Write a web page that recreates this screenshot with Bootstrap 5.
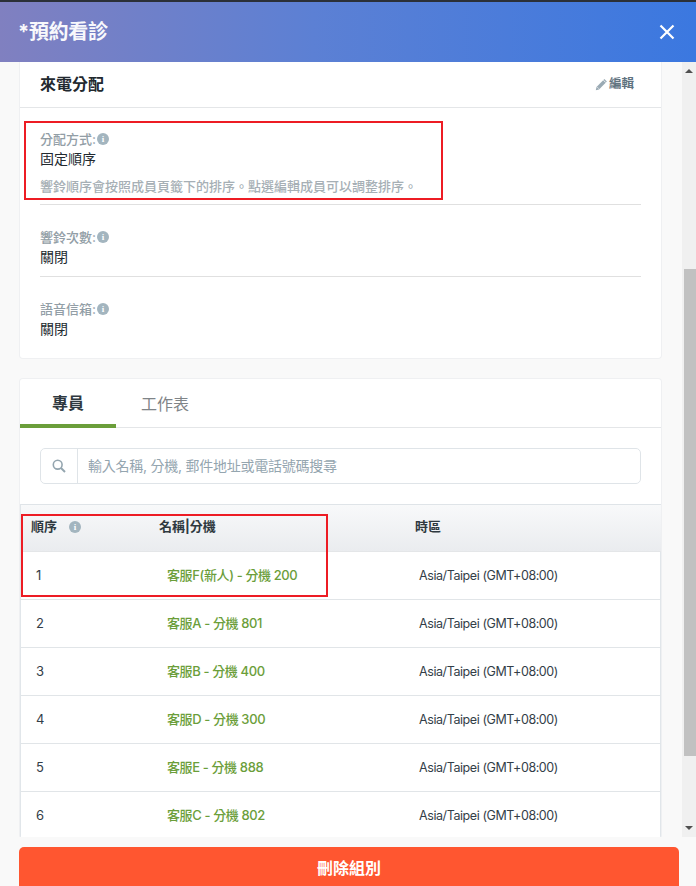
<!DOCTYPE html>
<html lang="zh-Hant">
<head>
<meta charset="utf-8">
<title>預約看診</title>
<link href="https://cdn.jsdelivr.net/npm/bootstrap@5.3.0/dist/css/bootstrap.min.css" rel="stylesheet">
<style>
html,body{height:100%;overflow:hidden}
body{font-family:Inter,"Noto Sans CJK TC",sans-serif;font-size:13px;color:#333e48;background:#f9f9f9;height:886px;border-top:2px solid #2b3038}
.hdr{height:60px;background:linear-gradient(90deg,#8080c0 0%,#5c80d4 45%,#3b78e0 100%);padding:0 21px 0 18px}
.hdr-title{font-size:20px;font-weight:700;color:#fff;opacity:.95;margin:0;letter-spacing:-.3px}
.stage{height:775px;overflow:hidden}
.scroll-pane{flex:1 1 0;min-width:0;padding:0 20px 0 19px;overflow:hidden;position:relative}
.sbar{width:14px;background:#f0f0f0;position:relative;flex:none}
.sbar-thumb{width:12px;height:487px;margin:207px 0 0 2px;background:#c1c1c1}
.sbar-up,.sbar-dn{position:absolute;left:3px;width:0;height:0;border-left:4px solid transparent;border-right:4px solid transparent}
.sbar-up{top:7px;border-bottom:4px solid #505050}
.sbar-dn{bottom:7px;border-top:4px solid #505050}
.panel{background:#fff;border:1px solid #eff0f2;border-radius:4px;width:643px}
.panel-top{border-top:0;border-radius:0 0 4px 4px;height:297px}
.panel-head{height:46px;border-bottom:1px solid #e4e6e8;padding:0 27px 0 20px}
.panel-title{font-size:16px;font-weight:700;color:#22292f;margin:0}
.edit-link{font-size:12.5px;color:#5f7380;font-weight:700;gap:1px}
.fld{margin:0 20px}
.fld-first{border-bottom:1px solid #e0e0e0;height:97px;padding-top:22px}
.fld-mid{border-bottom:1px solid #e0e0e0;padding-top:23px;height:72px}
.fld-last{padding-top:23px;height:72px}
.lbl{color:#929ea6;font-size:13px;font-weight:500;line-height:18px;gap:1px}
.val{color:#22292f;font-size:14px;line-height:20px;margin-top:1px}
.hint{color:#a6afb5;font-size:13px;font-weight:500;line-height:16px;margin-top:9px}
.info-dot{width:12px;height:12px;border-radius:50%;background:#a3b5bf;color:#fff;font-size:9px;font-weight:700;line-height:12px;text-align:center;display:inline-block;font-family:"Liberation Serif",serif;flex:none}
.panel-list{margin-top:19px;height:461px;overflow:hidden;border-bottom:0}
.tab-row{height:49px;border-bottom:1px solid #e4e6e8;margin:0;padding:0}
.tab-row .tab-item{width:96px;height:49px;display:flex;align-items:center;justify-content:center;font-size:16px;color:#7f8488;line-height:1;padding-top:1px;text-decoration:none}
.tab-row .tab-on{font-weight:700;color:#2f3940;border-bottom:4px solid #6b9e3a;padding-top:3px}
.tab-row .tab-second{width:auto;margin-left:25px}
.srch{margin:20px;height:36px;border:1px solid #dfe4e8;border-radius:5px}
.srch-ico{width:37px;border-right:1px solid #dfe4e8}
.srch-in{border:0;outline:0;flex:1;padding:0 10px 2px;font-size:14px;letter-spacing:-.25px;background:transparent;color:#333e48;min-width:0}
.srch-in::placeholder{color:#94a5af;opacity:1}
.tbl-wrap{border-left:1px solid #e1e6ea;border-right:1px solid #e1e6ea;border-top:1px solid #dfe4e8;width:641px}
.agents{table-layout:fixed;width:640px;margin:0;border-collapse:collapse}
.agents th{height:46px;font-size:13px;font-weight:700;color:#2f3940;background:linear-gradient(180deg,#f8f9fa 0%,#eaecef 100%);border-bottom:1px solid #e4e6e8;padding:0 0 2px 10px;vertical-align:middle}
.agents td{height:48px;font-size:13px;color:#333e48;border-bottom:1px solid #e1e5e8;padding:2px 0 0;vertical-align:middle}
.agents td.c1{padding-left:15px}
.agents td.c2{padding-left:18px;color:#6b9e3a;letter-spacing:-.38px;font-weight:500}
.agents td.c3{padding-left:14px;font-size:12.5px;letter-spacing:-.42px}
.foot{height:49px;padding:10px 17px 0 19px;overflow:hidden;background:#f9f9f9}
.del-btn{width:660px;height:60px;background:#ff5630;border:0;border-radius:5px 5px 0 0;color:#fff;font-weight:700;font-size:16px;padding:0 0 18px;line-height:1}
.del-btn:hover{background:#ff5630;color:#fff}
.redbox{position:absolute;border:2px solid #ed1c24;pointer-events:none}
.rb1{left:24px;top:121px;width:419px;height:79px}
.rb2{left:21px;top:514px;width:307px;height:83px}
</style>
</head>
<body>
<div class="hdr d-flex align-items-center justify-content-between">
  <h1 class="hdr-title">*預約看診</h1>
  <svg width="16" height="16" viewBox="0 0 16 16" aria-label="關閉"><path d="M1.5 1.5l13 13M14.5 1.5l-13 13" stroke="#fff" stroke-width="2.2" fill="none"/></svg>
</div>
<div class="stage d-flex">
  <div class="scroll-pane">
    <div class="panel panel-top">
      <div class="panel-head d-flex align-items-center justify-content-between">
        <h2 class="panel-title">來電分配</h2>
        <span class="edit-link d-flex align-items-center">
          <svg width="13" height="13" viewBox="0 0 13 13"><path d="M.8 12.2l.7-3.2L9.4 1.1l2.5 2.5L4 11.5z" fill="#9aaab4"/><path d="M8.4 2.2l2.4 2.4" stroke="#fff" stroke-width=".8"/><path d="M2.3 9.2l1.5 1.5" stroke="#fff" stroke-width=".7"/></svg>編輯
        </span>
      </div>
      <div class="fld fld-first">
        <div class="lbl d-flex align-items-center">分配方式:<span class="info-dot">i</span></div>
        <div class="val">固定順序</div>
        <div class="hint">響鈴順序會按照成員頁籤下的排序。點選編輯成員可以調整排序。</div>
      </div>
      <div class="fld fld-mid">
        <div class="lbl d-flex align-items-center">響鈴次數:<span class="info-dot">i</span></div>
        <div class="val">關閉</div>
      </div>
      <div class="fld fld-last">
        <div class="lbl d-flex align-items-center">語音信箱:<span class="info-dot">i</span></div>
        <div class="val">關閉</div>
      </div>
    </div>
    <div class="panel panel-list">
      <nav class="tab-row d-flex">
        <a class="tab-item tab-on" href="#">專員</a>
        <a class="tab-item tab-second" href="#">工作表</a>
      </nav>
      <div class="srch d-flex">
        <span class="srch-ico d-flex align-items-center justify-content-center">
          <svg width="14" height="14" viewBox="0 0 14 14"><circle cx="5.7" cy="5.7" r="4.4" fill="none" stroke="#94a5af" stroke-width="1.6"/><path d="M9 9l4 4" stroke="#94a5af" stroke-width="2"/></svg>
        </span>
        <input class="srch-in" type="text" placeholder="輸入名稱, 分機, 郵件地址或電話號碼搜尋">
      </div>
      <div class="tbl-wrap">
        <table class="agents">
          <colgroup><col style="width:128px"><col style="width:256px"><col></colgroup>
          <thead><tr><th><span class="d-flex align-items-center gap-2">順序 <span class="info-dot ms-1">i</span></span></th><th>名稱|分機</th><th>時區</th></tr></thead>
          <tbody>
            <tr><td class="c1">1</td><td class="c2">客服F(新人) - 分機 200</td><td class="c3">Asia/Taipei (GMT+08:00)</td></tr>
            <tr><td class="c1">2</td><td class="c2">客服A - 分機 801</td><td class="c3">Asia/Taipei (GMT+08:00)</td></tr>
            <tr><td class="c1">3</td><td class="c2">客服B - 分機 400</td><td class="c3">Asia/Taipei (GMT+08:00)</td></tr>
            <tr><td class="c1">4</td><td class="c2">客服D - 分機 300</td><td class="c3">Asia/Taipei (GMT+08:00)</td></tr>
            <tr><td class="c1">5</td><td class="c2">客服E - 分機 888</td><td class="c3">Asia/Taipei (GMT+08:00)</td></tr>
            <tr><td class="c1">6</td><td class="c2">客服C - 分機 802</td><td class="c3">Asia/Taipei (GMT+08:00)</td></tr>
          </tbody>
        </table>
      </div>
    </div>
  </div>
  <div class="sbar"><span class="sbar-up"></span><div class="sbar-thumb"></div><span class="sbar-dn"></span></div>
</div>
<div class="foot"><button class="btn del-btn" type="button">刪除組別</button></div>
<div class="redbox rb1"></div>
<div class="redbox rb2"></div>
<script src="https://cdn.jsdelivr.net/npm/bootstrap@5.3.0/dist/js/bootstrap.bundle.min.js"></script>
</body>
</html>
